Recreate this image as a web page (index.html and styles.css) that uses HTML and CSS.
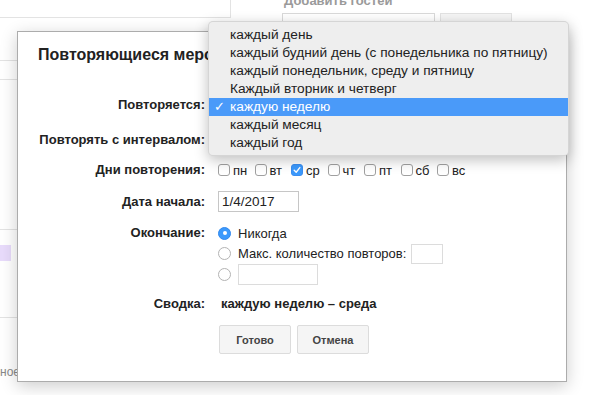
FILE: index.html
```html
<!DOCTYPE html>
<html lang="ru">
<head>
    <meta charset="UTF-8">
    <meta name="viewport" content="width=device-width, initial-scale=1.0">
    <title>Повторяющееся мероприятие</title>
    <link rel="stylesheet" href="styles.css">
</head>
<body>
    <!-- Page behind the dialog -->
    <div class="page">
        <div class="side">
            <div class="side-head"></div>
            <div class="side-row side-a"></div>
            <div class="side-row side-b"></div>
            <div class="side-row side-c"></div>
            <div class="side-row side-d"><span class="chip"></span></div>
            <div class="side-note">ное</div>
        </div>
        <div class="guests">
            <div class="guests-title">Добавить гостей</div>
            <div class="guests-form">
                <span class="guests-input"></span>
                <span class="guests-btn"></span>
            </div>
        </div>
    </div>

    <!-- Repeat dialog -->
    <div class="dialog">
        <h2 class="dialog-title">Повторяющиеся мероприятие</h2>
        <div class="form">
            <div class="row row-repeat">
                <span class="lbl">Повторяется:</span>
                <span class="select"></span>
            </div>
            <div class="row row-interval">
                <span class="lbl">Повторять с интервалом:</span>
                <span class="select select-small"></span>
            </div>
            <div class="row row-days">
                <span class="lbl">Дни повторения:</span>
                <div class="days">
                    <label class="day"><span class="cb"></span>пн</label>
                    <label class="day"><span class="cb"></span>вт</label>
                    <label class="day"><span class="cb on"><svg width="8" height="8" viewBox="0 0 8 8"><path d="M1.2 4.2 L3.2 6.2 L6.8 1.6" fill="none" stroke="#fff" stroke-width="1.4" stroke-linecap="round" stroke-linejoin="round"/></svg></span>ср</label>
                    <label class="day"><span class="cb"></span>чт</label>
                    <label class="day"><span class="cb"></span>пт</label>
                    <label class="day"><span class="cb"></span>сб</label>
                    <label class="day"><span class="cb"></span>вс</label>
                </div>
            </div>
            <div class="row row-start">
                <span class="lbl">Дата начала:</span>
                <span class="field date">1/4/2017</span>
            </div>
            <div class="row row-end">
                <span class="lbl">Окончание:</span>
                <div class="ends">
                    <div class="opt opt-never"><span class="radio on"></span>Никогда</div>
                    <div class="opt opt-count"><span class="radio"></span>Макс. количество повторов:<span class="field count"></span></div>
                    <div class="opt opt-until"><span class="radio"></span><span class="field until"></span></div>
                </div>
            </div>
            <div class="row row-summary">
                <span class="lbl">Сводка:</span>
                <span class="summary">каждую неделю – среда</span>
            </div>
            <div class="actions">
                <button class="btn">Готово</button>
                <button class="btn">Отмена</button>
            </div>
        </div>
    </div>

    <!-- Open select popup -->
    <ul class="menu">
        <li><span class="mark"></span>каждый день</li>
        <li><span class="mark"></span>каждый будний день (с понедельника по пятницу)</li>
        <li><span class="mark"></span>каждый понедельник, среду и пятницу</li>
        <li><span class="mark"></span>Каждый вторник и четверг</li>
        <li class="sel"><span class="mark">✓</span>каждую неделю</li>
        <li><span class="mark"></span>каждый месяц</li>
        <li><span class="mark"></span>каждый год</li>
    </ul>
</body>
</html>
```

FILE: styles.css
```css
/* Base */
body {
    margin: 0;
    font-family: "Liberation Sans", Arial, sans-serif;
    font-size: 13px;
    color: #222;
    background: #fff;
    overflow: hidden;
}

/* Page behind the dialog */
.page {
    display: flex;
}
.side {
    width: 231px;
    flex: none;
}
.side-head {
    height: 17px;
    border-bottom: 1px solid #e3e3e3;
    border-right: 1px solid #e3e3e3;
}
.side-row {
    border-bottom: 1px solid #e3e3e3;
}
.side-a { height: 42px; }
.side-b { height: 18px; }
.side-c { height: 149px; }
.side-d {
    height: 72px;
    padding-top: 15px;
}
.chip {
    display: block;
    width: 11px;
    height: 16px;
    background: #e8dbfb;
}
.side-note {
    margin-top: 48px;
    font-size: 12px;
    line-height: 13px;
    color: #888;
}
.guests {
    padding-left: 51px;
}
.guests-title {
    margin-top: -7px;
    padding-left: 2px;
    font-weight: bold;
    line-height: 16px;
    color: #9a9a9a;
}
.guests-form {
    display: flex;
    gap: 5px;
    margin-top: 4px;
}
.guests-input {
    width: 151px;
    height: 28px;
    border: 1px solid #d9d9d9;
}
.guests-btn {
    width: 70px;
    height: 28px;
    border: 1px solid #e2e2e2;
    background: #f5f5f5;
}

/* Dialog */
.dialog {
    position: absolute;
    left: 17px;
    top: 31px;
    width: 548px;
    height: 349px;
    background: #fff;
    border: 1px solid #acacac;
    box-shadow: 0 4px 16px rgba(0, 0, 0, 0.2);
}
.dialog-title {
    margin: 14px 0 0 20px;
    font-size: 16px;
    line-height: 18px;
    font-weight: bold;
    white-space: nowrap;
}
.form {
    margin-top: 31px;
}
.row {
    display: flex;
    align-items: center;
}
.lbl {
    width: 187px;
    flex: none;
    margin-right: 13px;
    text-align: right;
    font-weight: bold;
    line-height: 16px;
}
.row-repeat { height: 20px; }
.row-interval { height: 20px; margin-top: 15px; }
.row-days { height: 20px; margin-top: 10px; }
.row-start { height: 21px; margin-top: 11px; }
.row-end { align-items: flex-start; margin-top: 13px; }
.row-summary { height: 16px; margin-top: 11px; }

.select {
    height: 20px;
    width: 130px;
    border: 1px solid #ccc;
    box-sizing: border-box;
}
.select-small {
    width: 40px;
}

/* Day checkboxes */
.days {
    display: flex;
}
.day {
    width: 36.5px;
    display: flex;
    align-items: center;
}
.cb {
    width: 12px;
    height: 12px;
    box-sizing: border-box;
    margin-right: 3px;
    border: 1px solid #a0a0a0;
    border-radius: 3px;
    background: #fff;
    display: flex;
    align-items: center;
    justify-content: center;
}
.cb.on {
    background: #3b99fc;
    border-color: #3b8ef0;
}

/* Fields */
.field {
    display: block;
    box-sizing: border-box;
    border: 1px solid #c6c6c6;
    background: #fff;
}
.date {
    width: 81px;
    height: 21px;
    padding-left: 3px;
    line-height: 19px;
    font-size: 13.5px;
}
.count {
    width: 32px;
    height: 20px;
    margin-left: 5px;
    border-color: #dcdcdc;
}
.until {
    width: 80px;
    height: 21px;
    border-color: #dcdcdc;
}

/* End options */
.opt {
    display: flex;
    align-items: center;
}
.opt-never { height: 16px; }
.opt-count { height: 21px; margin-top: 2px; }
.opt-until { height: 21px; }
.radio {
    width: 13px;
    height: 13px;
    flex: none;
    box-sizing: border-box;
    margin-right: 7px;
    border: 1px solid #b3b3b3;
    border-radius: 50%;
    background: #fff;
    display: flex;
    align-items: center;
    justify-content: center;
}
.radio.on {
    background: #3b99fc;
    border-color: #3189ee;
}
.radio.on::after {
    content: "";
    width: 4px;
    height: 4px;
    border-radius: 50%;
    background: #fff;
}

.summary {
    margin-left: 3px;
    font-weight: bold;
    line-height: 16px;
}

/* Buttons */
.actions {
    display: flex;
    gap: 6px;
    margin-top: 13px;
    padding-left: 201px;
}
.btn {
    width: 72px;
    height: 29px;
    padding: 0;
    border: 1px solid #dcdcdc;
    border-radius: 2px;
    background: #f5f5f5;
    font-family: "Liberation Sans", Arial, sans-serif;
    font-size: 11px;
    font-weight: bold;
    color: #444;
}

/* Select popup */
.menu {
    position: absolute;
    left: 208px;
    top: 21px;
    width: 361px;
    height: 135px;
    box-sizing: border-box;
    margin: 0;
    padding: 4px 0;
    list-style: none;
    background: #eeeeee;
    border: 1px solid rgba(0, 0, 0, 0.1);
    border-radius: 5px;
    box-shadow: 0 4px 14px rgba(0, 0, 0, 0.25);
    font-size: 13.7px;
}
.menu li {
    display: flex;
    height: 18px;
    line-height: 18px;
    white-space: nowrap;
}
.menu .mark {
    width: 16px;
    margin-left: 5px;
    flex: none;
    font-family: "DejaVu Sans", sans-serif;
    font-size: 13px;
    font-weight: bold;
}
.menu .sel {
    background: #4a9af9;
    color: #fff;
}
```
